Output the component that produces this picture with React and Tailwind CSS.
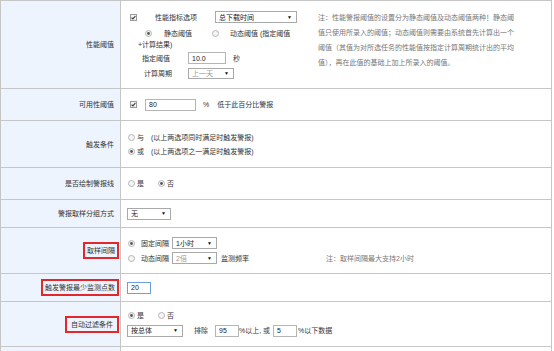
const FONT = { fontFamily: '"Liberation Sans", "Noto Sans CJK SC", sans-serif' }

function Check() {
  return (
    <svg width="7" height="7" viewBox="0 0 7 7" className="shrink-0">
      <rect x="0.5" y="0.5" width="6" height="6" fill="#f3f3f3" stroke="#9a9a9a" />
      <path d="M1.6 3.6 L2.9 4.9 L5.4 2" fill="none" stroke="#333" strokeWidth="1.1" />
    </svg>
  )
}

function Radio({ on }) {
  return (
    <svg width="7" height="7" viewBox="0 0 7 7" className="shrink-0">
      <circle cx="3.5" cy="3.5" r="3" fill="#f5f5f5" stroke="#b5b5b5" />
      {on && <circle cx="3.5" cy="3.5" r="1.4" fill="#555" />}
    </svg>
  )
}

function Select({ value, w, h = 12, off }) {
  return (
    <span
      className={`flex items-center justify-between border border-[#a9a9a9] bg-white pl-[3px] pr-[4px] ${off ? 'text-[#999]' : 'text-[#222]'}`}
      style={{ width: w, height: h }}
    >
      <span>{value}</span>
      <span className="text-[5px] text-[#111]">▼</span>
    </span>
  )
}

function Input({ value, w, h = 12, blue }) {
  return (
    <span
      className={`flex items-center border bg-white pl-[3px] text-[#222] ${blue ? 'border-[#6e9de0]' : 'border-[#b5b5b5]'}`}
      style={{ width: w, height: h }}
    >
      {value}
    </span>
  )
}

function Row({ h, label, boxed, px = 'px-[2px]', children }) {
  return (
    <div className="flex border-b border-[#c6c6c6]" style={{ height: h }}>
      <div className="flex w-[120px] shrink-0 items-center justify-end border-r border-[#c6c6c6] bg-[#edf4fd]">
        {boxed ? (
          <span className={`mr-[1px] border-2 border-[#e3282d] py-[2px] leading-[9px] ${px}`}>{label}</span>
        ) : (
          <span className="mr-[6px]">{label}</span>
        )}
      </div>
      <div className="flex-1">{children}</div>
    </div>
  )
}

export default function App() {
  return (
    <div className="min-h-[351px] bg-white text-[7px] leading-none text-[#333]" style={FONT}>
      <div className="w-[552px] border-l border-r border-t border-[#c6c6c6]">
        <Row h={88} label="性能阈值">
          <div className="flex">
            <div className="flex w-[190px] flex-col">
              <div className="mt-[10px] flex h-[12px] items-center pl-[9px]">
                <Check />
                <span className="ml-[18px] w-[60px]">性能指标选项</span>
                <Select value="总下载时间" w={82} />
              </div>
              <div className="mt-[5px] flex h-[10px] items-center pl-[24px]">
                <Radio on />
                <span className="ml-[12px] w-[48px]">静态阈值</span>
                <Radio />
                <span className="ml-[11px]">动态阈值 (指定阈值</span>
              </div>
              <div className="mt-[2px] flex h-[8px] items-center pl-[17px]">+计算结果)</div>
              <div className="mt-[4px] flex h-[12px] items-center pl-[21px]">
                <span className="w-[46px]">指定阈值</span>
                <Input value="10.0" w={38} />
                <span className="ml-[7px]">秒</span>
              </div>
              <div className="mt-[4px] flex h-[11px] items-center pl-[23px]">
                <span className="w-[44px]">计算周期</span>
                <Select value="上一天" w={46} h={11} off />
              </div>
            </div>
            <div className="ml-[7px] mt-[9px] whitespace-nowrap leading-[15px] text-[#777]">
              <div>注：性能警报阈值的设置分为静态阈值及动态阈值两种！静态阈</div>
              <div>值只使用所录入的阈值；动态阈值则需要由系统首先计算出一个</div>
              <div>阈值（其值为对所选任务的性能值按指定计算周期统计出的平均</div>
              <div>值），再在此值的基础上加上所录入的阈值。</div>
            </div>
          </div>
        </Row>

        <Row h={32} label="可用性阈值">
          <div className="flex h-full items-center pl-[9px]">
            <Check />
            <span className="ml-[8px]"><Input value="80" w={51} /></span>
            <span className="ml-[7px]">%</span>
            <span className="ml-[8px]">低于此百分比警报</span>
          </div>
        </Row>

        <Row h={47} label="触发条件">
          <div className="flex h-full flex-col justify-center gap-[7px] pl-[7px]">
            <div className="flex items-center">
              <Radio />
              <span className="ml-[2px] w-[14px]">与</span>
              <span>(以上两选项同时满足时触发警报)</span>
            </div>
            <div className="flex items-center">
              <Radio on />
              <span className="ml-[2px] w-[14px]">或</span>
              <span>(以上两选项之一满足时触发警报)</span>
            </div>
          </div>
        </Row>

        <Row h={32} label="是否绘制警报线">
          <div className="flex h-full items-center pl-[7px]">
            <Radio />
            <span className="ml-[2px] w-[21px]">是</span>
            <Radio on />
            <span className="ml-[2px]">否</span>
          </div>
        </Row>

        <Row h={28} label="警报取样分组方式">
          <div className="flex h-full items-center pl-[6px]">
            <Select value="无" w={44} />
          </div>
        </Row>

        <Row h={46} label="取样间隔" boxed>
          <div className="flex h-full items-center">
            <div className="flex w-[205px] flex-col gap-[3px] pl-[7px]">
              <div className="flex items-center">
                <Radio on />
                <span className="ml-[6px] w-[31px]">固定间隔</span>
                <Select value="1小时" w={45} />
              </div>
              <div className="flex items-center">
                <Radio />
                <span className="ml-[6px] w-[31px]">动态间隔</span>
                <Select value="2倍" w={45} off />
                <span className="ml-[4px]">监测频率</span>
              </div>
            </div>
            <span className="mt-[15px] text-[#777]">注：取样间隔最大支持2小时</span>
          </div>
        </Row>

        <Row h={28} label="触发警报最少监测点数" boxed>
          <div className="flex h-full items-center pl-[6px]">
            <Input value="20" w={24} blue />
          </div>
        </Row>

        <Row h={45} label="自动过滤条件" boxed px="px-[4px]">
          <div className="flex h-full flex-col justify-center gap-[6px] pl-[6px]">
            <div className="flex items-center pl-[1px]">
              <Radio on />
              <span className="ml-[2px] w-[21px]">是</span>
              <Radio />
              <span className="ml-[2px]">否</span>
            </div>
            <div className="flex items-center">
              <Select value="按总体" w={56} />
              <span className="ml-[11px] w-[21px]">排除</span>
              <Input value="95" w={24} />
              <span className="w-[34px]">%以上, 或</span>
              <Input value="5" w={24} />
              <span className="ml-[1px]">%以下数据</span>
            </div>
          </div>
        </Row>

        <Row h={30} label="" />
      </div>
    </div>
  )
}
